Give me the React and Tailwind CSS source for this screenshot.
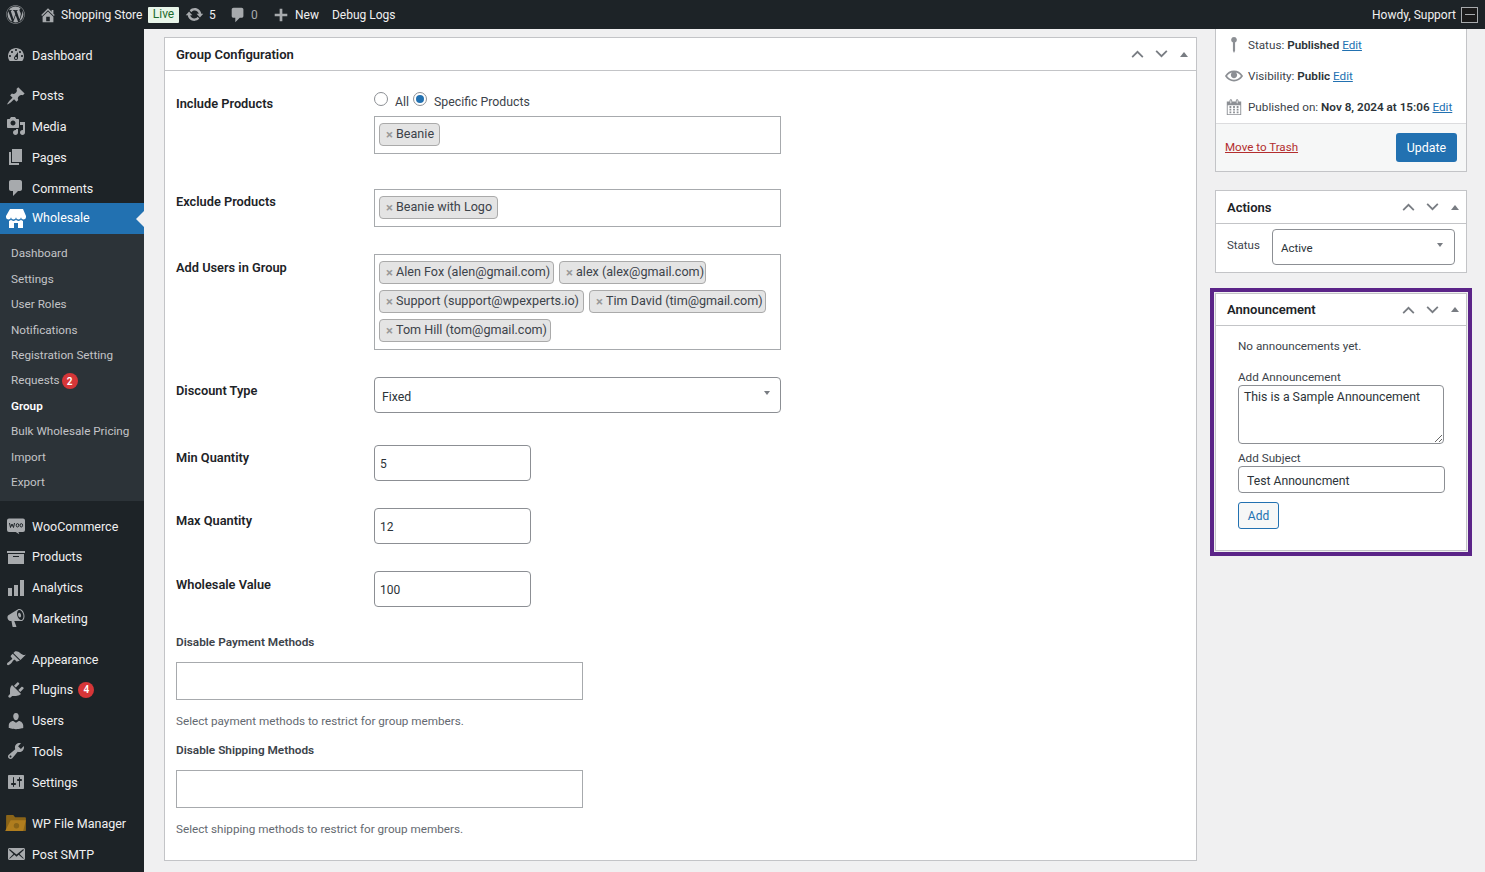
import React from "react";
import { FaWordpress } from "react-icons/fa";

const P = {
  dashboard: "M3.76 16h12.48c1.1-1.37 1.76-3.11 1.76-5 0-4.42-3.58-8-8-8s-8 3.58-8 8c0 1.89.66 3.63 1.76 5zM10 4c.55 0 1 .45 1 1s-.45 1-1 1-1-.45-1-1 .45-1 1-1zM6 6c.55 0 1 .45 1 1s-.45 1-1 1-1-.45-1-1 .45-1 1-1zm8 0c.55 0 1 .45 1 1s-.45 1-1 1-1-.45-1-1 .45-1 1-1zm-5.37 5.55L12 7v6c0 1.1-.9 2-2 2s-2-.9-2-2c0-.57.24-1.08.63-1.45zM4 10c.55 0 1 .45 1 1s-.45 1-1 1-1-.45-1-1 .45-1 1-1zm12 0c.55 0 1 .45 1 1s-.45 1-1 1-1-.45-1-1 .45-1 1-1zm-5 3c0-.55-.45-1-1-1s-1 .45-1 1 .45 1 1 1 1-.45 1-1z",
  post: "M10.44 3.02l1.82-1.82 6.36 6.35-1.83 1.82c-1.05-.68-2.48-.57-3.41.36l-.75.75c-.92.93-1.04 2.35-.35 3.41l-1.83 1.82-2.41-2.41-2.8 2.79c-.42.42-3.38 2.71-3.8 2.29s1.86-3.39 2.28-3.81l2.79-2.79L4.1 9.36l1.83-1.82c1.05.69 2.48.57 3.4-.36l.75-.75c.93-.92 1.05-2.35.36-3.41z",
  media: "M13 11V4c0-.55-.45-1-1-1h-1.67L9 1H5L3.67 3H2c-.55 0-1 .45-1 1v7c0 .55.45 1 1 1h10c.55 0 1-.45 1-1zM7 4.5c1.38 0 2.5 1.12 2.5 2.5S8.38 9.5 7 9.5 4.5 8.38 4.5 7 5.62 4.5 7 4.5zM14 6h5v10.5c0 1.38-1.12 2.5-2.5 2.5S14 17.88 14 16.5s1.12-2.5 2.5-2.5c.17 0 .34.02.5.05V9h-3V6zm-4 8.05V13h2v3.5c0 1.38-1.12 2.5-2.5 2.5S7 17.88 7 16.5 8.12 14 9.5 14c.17 0 .34.02.5.05z",
  page: "M6 15V2h10v13H6zm-1 1h8v2H3V5h2v11z",
  comment: "M5 2h9c1.1 0 2 .9 2 2v7c0 1.1-.9 2-2 2h-2l-5 5v-5H5c-1.1 0-2-.9-2-2V4c0-1.1.9-2 2-2z",
  store: "M1 10c.41.29.96.43 1.5.43.55 0 1.09-.14 1.5-.43.62-.46 1-1.17 1-2 0 .83.37 1.54 1 2 .41.29.96.43 1.5.43.55 0 1.09-.14 1.5-.43.62-.46 1-1.17 1-2 0 .83.37 1.54 1 2 .41.29.96.43 1.51.43.54 0 1.08-.14 1.49-.43.62-.46 1-1.17 1-2 0 .83.37 1.54 1 2 .41.29.96.43 1.5.43.55 0 1.09-.14 1.5-.43.63-.46 1-1.17 1-2V7l-3-7H4L0 7v1c0 .83.37 1.54 1 2zm2 8.99h5v-5h4v5h5v-7c-.37-.05-.72-.22-1-.43-.63-.45-1-.73-1-1.56 0 .83-.38 1.11-1 1.56-.41.3-.95.43-1.49.44-.55 0-1.1-.14-1.51-.44-.63-.45-1-.73-1-1.56 0 .83-.38 1.11-1 1.56-.41.3-.95.43-1.5.44-.54 0-1.09-.14-1.5-.44-.63-.45-1-.73-1-1.57 0 .84-.38 1.12-1 1.57-.29.21-.63.38-1 .44v6.99z",
  archive: "M19 4v2H1V4h18zM2 7h16v10H2V7zm11 3V9H7v1h6z",
  chart: "M18 18V2h-4v16h4zm-6 0V7H8v11h4zm-6 0v-8H2v8h4z",
  megaphone: "M18.15 5.94c.46 1.62.38 3.22-.02 4.48-.42 1.28-1.26 2.18-2.3 2.48-.16.06-.26.06-.4.06-.06.02-.12.02-.18.02-.06.02-.14.02-.22.02h-6.8l2.22 5.5c.02.14-.06.26-.14.34-.08.1-.24.16-.34.16H6.95c-.1 0-.26-.06-.34-.16-.08-.08-.16-.2-.14-.34l-1-5.5H4.25l-.02-.02c-.5.06-1.08-.18-1.54-.62s-.88-1.08-1.06-1.88c-.24-.8-.2-1.56-.02-2.2.18-.62.58-1.08 1.06-1.3l.02-.02 9-5.4c.1-.06.18-.1.24-.16.06-.04.14-.08.24-.12.16-.08.28-.12.5-.18 1.04-.3 2.24.1 3.22.98s1.76 2.18 2.2 3.82zm-2.58 5.98h-.02c.4-.1.74-.34 1.04-.7.58-.7.86-1.76.86-3.04 0-.64-.1-1.3-.28-1.98-.34-1.36-1.02-2.5-1.78-3.24s-1.68-1.1-2.46-.88c-.82.22-1.4.96-1.7 2-.32 1.04-.28 2.36.06 3.72.38 1.36 1 2.5 1.8 3.24.78.74 1.62 1.1 2.48.88zm-2.54-7.08c.22-.04.42-.02.62.04.38.16.76.48 1.02 1s.42 1.2.42 1.78c0 .3-.04.56-.12.8-.18.48-.44.84-.86.94-.34.1-.8-.06-1.14-.4s-.64-.86-.78-1.5c-.18-.62-.12-1.24.02-1.72s.48-.84.82-.94z",
  appearance: "M14.48 11.06L7.41 3.99l1.5-1.5c.5-.56 2.3-.47 3.51.32 1.21.8 1.43 1.28 2.91 2.1 1.18.64 2.45 1.26 4.45.85zm-.71.71L6.7 4.7 4.93 6.47c-.39.39-.39 1.02 0 1.41l1.06 1.06c.39.39.39 1.03 0 1.42-.6.6-1.43 1.11-2.21 1.69-.35.26-.7.53-1.01.84C1.43 13.23.4 14.98 1.25 15.83c.86.85 2.6-.18 3.94-1.52.31-.31.58-.66.84-1.02.57-.78 1.08-1.61 1.69-2.21.39-.39 1.02-.39 1.41 0l1.06 1.06c.39.39 1.02.39 1.41 0z",
  plugin: "M13.11 4.36L9.87 7.6 8 5.73l3.24-3.24c.35-.34 1.05-.2 1.56.32.52.51.66 1.21.31 1.55zm-8 1.77l.91-1.12 9.01 9.01-1.19.84c-.71.71-2.63 1.16-3.82 1.16H6.14L4.9 17.26c-.59.59-1.54.59-2.12 0-.59-.58-.59-1.53 0-2.12l1.24-1.24v-3.88c0-1.13.4-3.19 1.09-3.89zm7.26 3.97l3.24-3.24c.34-.35 1.04-.21 1.55.31.52.51.66 1.21.31 1.55l-3.24 3.25z",
  users: "M10 9.25c-2.27 0-2.73-3.44-2.73-3.44C7 4.02 7.82 2 9.97 2c2.16 0 2.98 2.02 2.71 3.81 0 0-.41 3.44-2.68 3.44zm0 2.57L12.72 10c2.39 0 4.52 2.33 4.52 4.53v2.49s-3.65 1.13-7.24 1.13c-3.65 0-7.24-1.13-7.24-1.13v-2.49c0-2.25 1.94-4.48 4.47-4.48z",
  tools: "M16.68 9.77c-1.34 1.34-3.3 1.67-4.95.99l-5.41 6.52c-.99.99-2.59.99-3.58 0s-.99-2.59 0-3.57l6.52-5.42c-.68-1.65-.35-3.61.99-4.95 1.28-1.28 3.12-1.62 4.72-1.06l-2.89 2.89 2.82 2.82 2.86-2.87c.53 1.58.18 3.39-1.08 4.65zM3.81 16.21c.4.39 1.04.39 1.43 0 .4-.4.4-1.04 0-1.43-.39-.4-1.03-.4-1.43 0-.39.39-.39 1.03 0 1.43z",
  settings: "M18 16V4c0-.55-.45-1-1-1H3c-.55 0-1 .45-1 1v12c0 .55.45 1 1 1h14c.55 0 1-.45 1-1zM8 11h1c.55 0 1 .45 1 1s-.45 1-1 1H8v1.5c0 .28-.22.5-.5.5s-.5-.22-.5-.5V13H6c-.55 0-1-.45-1-1s.45-1 1-1h1V5.5c0-.28.22-.5.5-.5s.5.22.5.5V11zm5-2h-1c-.55 0-1-.45-1-1s.45-1 1-1h1V5.5c0-.28.22-.5.5-.5s.5.22.5.5V7h1c.55 0 1 .45 1 1s-.45 1-1 1h-1v5.5c0 .28-.22.5-.5.5s-.5-.22-.5-.5V9z",
  email: "M19 14.5v-9c0-.83-.67-1.5-1.5-1.5H3.49c-.83 0-1.5.67-1.5 1.5v9c0 .83.67 1.5 1.5 1.5H17.5c.83 0 1.5-.67 1.5-1.5zm-1.31-9.11c.33.33.15.67-.03.84L13.6 9.95l3.9 4.06c.12.14.2.36.06.51-.13.16-.43.15-.56.05l-4.37-3.73-2.14 1.95-2.13-1.95-4.37 3.73c-.13.1-.43.11-.56-.05-.14-.15-.06-.37.06-.51l3.9-4.06-4.06-3.72c-.18-.17-.36-.51-.03-.84s.67-.17.95.07l6.24 5.04 6.25-5.04c.28-.24.62-.4.95-.07z",
  home: "M16 8.5l1.53 1.53-1.06 1.06L10 4.62l-6.47 6.47-1.06-1.06L10 2.5l4 4v-2h2v4zm-6-2.46l6 5.99V18H4v-5.97zM12 17v-5H8v5h4z",
  update: "M10.2 3.28c3.53 0 6.43 2.61 6.92 6h2.08l-3.5 4-3.5-4h2.32c-.45-1.97-2.21-3.45-4.32-3.45-1.45 0-2.73.71-3.54 1.78L4.95 5.66C6.23 4.2 8.11 3.28 10.2 3.28zm-.4 13.44c-3.52 0-6.43-2.61-6.92-6H.8l3.5-4c1.17 1.33 2.33 2.67 3.5 4H5.48c.45 1.97 2.21 3.45 4.32 3.45 1.45 0 2.73-.71 3.54-1.78l1.71 1.95c-1.28 1.46-3.15 2.38-5.25 2.38z",
  plus: "M17 8.5v3h-5.5V17h-3v-5.5H3v-3h5.5V3h3v5.5H17z",
  pin: "M10 1a3.2 3.2 0 0 1 1.200 6.170V16.500L10 19l-1.200-2.500V7.170A3.200 3.200 0 0 1 10 1z",
  eye: "M19.7 9.4C17.7 6 14 3.9 10 3.9S2.3 6 .3 9.4L0 10l.3.6c2 3.4 5.7 5.5 9.7 5.5s7.7-2.1 9.7-5.5l.3-.6-.3-.6zM10 14.1c-3.1 0-6-1.6-7.7-4.1C3.6 8 5.7 6.6 8 6.1c-.9.6-1.5 1.7-1.5 2.9 0 1.9 1.6 3.5 3.5 3.5s3.5-1.6 3.5-3.5c0-1.2-.6-2.2-1.5-2.9 2.3.5 4.4 1.9 5.7 3.9-1.7 2.5-4.6 4.1-7.7 4.1z",
  calendar: "M15 4h3v15H2V4h3V3c0-.41.15-.76.44-1.06.29-.29.65-.44 1.06-.44s.77.15 1.06.44c.29.3.44.65.44 1.06v1h4V3c0-.41.15-.76.44-1.06.29-.29.65-.44 1.06-.44s.77.15 1.06.44c.29.3.44.65.44 1.06v1zM6 3v2.5c0 .14.05.26.15.36.09.09.21.14.35.14s.26-.05.35-.14c.1-.1.15-.22.15-.36V3c0-.14-.05-.26-.15-.35-.09-.1-.21-.15-.35-.15s-.26.05-.35.15c-.1.09-.15.21-.15.35zm7 0v2.5c0 .14.05.26.14.36.1.09.22.14.36.14s.26-.05.36-.14c.09-.1.14-.22.14-.36V3c0-.14-.05-.26-.14-.35-.1-.1-.22-.15-.36-.15s-.26.05-.36.15c-.09.09-.14.21-.14.35zm4 15V8H3v10h14zM7 9v2H5V9h2zm2 0h2v2H9V9zm4 2V9h2v2h-2zm-6 1v2H5v-2h2zm2 0h2v2H9v-2zm4 2v-2h2v2h-2zm-6 1v2H5v-2h2zm4 2H9v-2h2v2zm4 0h-2v-2h2v2z",
};

const Ic = ({ d, className }) => (
  <svg viewBox="0 0 20 20" className={className} fill="currentColor" aria-hidden="true"><path d={d} /></svg>
);

const Woo = () => (
  <svg viewBox="0 0 20 20" className="w-[20px] h-[20px] text-[#a7aaad]" aria-hidden="true">
    <path fill="currentColor" d="M3 2.500h14a2 2 0 0 1 2 2v9.500a2 2 0 0 1-2 2h-4.600l.9 2.300-3.600-2.300H3a2 2 0 0 1-2-2V4.500a2 2 0 0 1 2-2z" />
    <path fill="none" stroke="#1d2327" strokeWidth="1" d="M3.500 7l1 4.500 1.500-3.500 1.500 3.500 1-4.500" />
    <ellipse cx="11.500" cy="9.300" rx="1.300" ry="1.700" fill="none" stroke="#1d2327" strokeWidth="1" />
    <ellipse cx="15.300" cy="9.300" rx="1.300" ry="1.700" fill="none" stroke="#1d2327" strokeWidth="1" />
  </svg>
);

const Folder = () => (
  <svg viewBox="0 0 24 20" className="w-[22px] h-[18px]" aria-hidden="true">
    <path fill="#8a6418" d="M2 1h7l2 2.500h11a1 1 0 0 1 1 1V18a1 1 0 0 1-1 1H1V2a1 1 0 0 1 1-1z" />
    <path fill="#b07d1e" d="M6 7h17l-3 12H0z" />
    <circle cx="12.500" cy="13" r="3" fill="#8a6418" />
  </svg>
);

const Badge = ({ n, ml }) => (
  <span className={`inline-flex w-[16px] h-[16px] items-center justify-center rounded-full bg-[#d63638] text-white text-[10px] font-semibold ${ml}`}>{n}</span>
);

const Row = ({ icon, custom, label, badge, active }) => (
  <div className={`relative flex items-center h-[30.75px] ${active ? "bg-[#2271b1] text-white" : "text-[#f0f0f1]"}`}>
    <div className="w-[32px] flex justify-center shrink-0">
      {custom || <Ic d={icon} className={`w-[20px] h-[20px] ${active ? "text-white" : "text-[#a7aaad]"}`} />}
    </div>
    <span className={active ? "" : "pt-[2px]"}>{label}</span>
    {badge && <Badge n={badge} ml="ml-[5px]" />}
    {active && <span className="absolute right-0 top-[8px] w-0 h-0 border-y-[8px] border-y-transparent border-r-[8px] border-r-[#f0f0f1]" />}
  </div>
);

const Sub = ({ label, badge, cur }) => (
  <div className={`flex items-center h-[25.4px] pl-[11px] text-[11.7px] ${cur ? "text-white font-semibold" : "text-[#c3c4c7]"}`}>
    <span>{label}</span>
    {badge && <Badge n={badge} ml="ml-[2px]" />}
  </div>
);

const Sidebar = () => (
  <aside className="w-[144px] shrink-0 bg-[#1d2327] text-[12.5px] pt-[11px]">
    <Row icon={P.dashboard} label="Dashboard" />
    <div className="h-[9.500px]" />
    <Row icon={P.post} label="Posts" />
    <Row icon={P.media} label="Media" />
    <Row icon={P.page} label="Pages" />
    <Row icon={P.comment} label="Comments" />
    <Row icon={P.store} label="Wholesale" active />
    <div className="bg-[#2c3338] pt-[7.500px] pb-[5.500px]">
      {["Dashboard", "Settings", "User Roles", "Notifications", "Registration Setting"].map((s) => <Sub key={s} label={s} />)}
      <Sub label="Requests" badge="2" />
      <Sub label="Group" cur />
      {["Bulk Wholesale Pricing", "Import", "Export"].map((s) => <Sub key={s} label={s} />)}
    </div>
    <div className="h-[9.750px]" />
    <Row custom={<Woo />} label="WooCommerce" />
    <Row icon={P.archive} label="Products" />
    <Row icon={P.chart} label="Analytics" />
    <Row icon={P.megaphone} label="Marketing" />
    <div className="h-[10px]" />
    <Row icon={P.appearance} label="Appearance" />
    <Row icon={P.plugin} label="Plugins" badge="4" />
    <Row icon={P.users} label="Users" />
    <Row icon={P.tools} label="Tools" />
    <Row icon={P.settings} label="Settings" />
    <div className="h-[10.500px]" />
    <Row custom={<Folder />} label="WP File Manager" />
    <Row icon={P.email} label="Post SMTP" />
  </aside>
);

const TopBar = () => (
  <header className="h-[29px] bg-[#1d2327] text-[#f0f0f1] text-[12px] flex items-center shrink-0">
    <FaWordpress className="ml-[6px] w-[19px] h-[19px] text-[#a7aaad]" />
    <Ic d={P.home} className="ml-[14px] w-[18px] h-[18px] text-[#a7aaad]" />
    <span className="ml-[4px] w-[81px] whitespace-nowrap">Shopping Store</span>
    <span className="ml-[6px] w-[31px] h-[16px] bg-[#e8f5e9] rounded-[1px] text-[#1e6b2e] text-[12px] leading-[15px] text-center">Live</span>
    <Ic d={P.update} className="ml-[6px] w-[19px] h-[19px] text-[#a7aaad]" />
    <span className="ml-[5px] w-[7px]">5</span>
    <Ic d={P.comment} className="ml-[13px] w-[18px] h-[18px] text-[#a7aaad]" />
    <span className="ml-[4px] w-[7px] text-[#a7aaad]">0</span>
    <Ic d={P.plus} className="ml-[14px] w-[18px] h-[18px] text-[#a7aaad]" />
    <span className="ml-[5px]">New</span>
    <span className="ml-[13px]">Debug Logs</span>
    <span className="ml-auto">Howdy, Support</span>
    <span className="ml-[5px] mr-[7px] w-[17px] h-[16px] border border-[#a7aaad] bg-[#1a1a1a] flex items-center justify-center">
      <span className="w-[10px] h-[1px] bg-[#a7aaad]" />
    </span>
  </header>
);

const Up = () => (
  <svg viewBox="0 0 14 9" className="w-[13px] h-[8px] text-[#787c82]" fill="none" stroke="currentColor" strokeWidth="2"><path d="M1 8l6-6 6 6" /></svg>
);
const Down = () => (
  <svg viewBox="0 0 14 9" className="w-[13px] h-[8px] text-[#787c82]" fill="none" stroke="currentColor" strokeWidth="2"><path d="M1 1l6 6 6-6" /></svg>
);
const Handles = () => (
  <div className="flex items-center">
    <Up />
    <span className="ml-[11px] mr-[12px]"><Down /></span>
    <span className="w-0 h-0 border-x-[4px] border-x-transparent border-b-[5px] border-b-[#787c82]" />
  </div>
);

const BoxHead = ({ title, className }) => (
  <div className={`flex items-center justify-between border-b border-[#c3c4c7] pl-[11px] ${className}`}>
    <span className="text-[13px] font-semibold text-[#1d2327] pt-[1px]">{title}</span>
    <Handles />
  </div>
);

const Tag = ({ children, w }) => (
  <span className={`inline-flex items-center h-[23px] bg-[#e4e4e4] border border-[#aaa] rounded-[4px] pl-[6px] text-[12.6px] text-[#3c434a] whitespace-nowrap ${w}`}>
    <span className="shrink-0 text-[#999] font-bold text-[13px] w-[10px]">×</span>
    {children}
  </span>
);

const Multi = ({ children }) => (
  <div className="w-[407px] min-h-[38px] border border-[#a7aaad] bg-white pl-[4px] pt-[6px] pb-[7px] flex flex-wrap gap-x-[5px] gap-y-[6px]">
    {children}
  </div>
);

const FormRow = ({ label, mt, children, lt }) => (
  <div className={`flex ${mt}`}>
    <div className={`w-[198px] shrink-0 text-[12.8px] font-semibold text-[#1d2327] ${lt}`}>{label}</div>
    {children}
  </div>
);

const NumInput = ({ v }) => (
  <input readOnly value={v} className="w-[157px] h-[36px] border border-[#8c8f94] rounded-[4px] bg-white px-[5px] pt-[2px] text-[12px] text-[#2c3338] outline-none" />
);

const Block = ({ label, help, mt }) => (
  <div className={mt}>
    <div className="text-[11.8px] font-semibold text-[#3c434a] leading-[18px]">{label}</div>
    <div className="mt-[11px] w-[407px] h-[38px] border border-[#a7aaad] bg-white" />
    <div className="mt-[12px] text-[11.7px] text-[#646970] leading-[18px]">{help}</div>
  </div>
);

const Main = () => (
  <section className="w-[1033px] h-[824px] mt-[8px] border border-[#c3c4c7] bg-white shrink-0">
    <BoxHead title="Group Configuration" className="h-[33px] pr-[8px]" />
    <div className="pl-[11px] pt-[20px]">
      <FormRow label="Include Products" lt="pt-[3px]">
        <div>
          <div className="flex items-center h-[25px] pb-[4px] text-[12.3px] text-[#3c434a]">
            <span className="w-[14px] h-[14px] rounded-full border border-[#8c8f94] bg-white -mt-[5px]" />
            <span className="ml-[7px] w-[14px] pt-[2px]">All</span>
            <span className="ml-[4px] w-[14px] h-[14px] rounded-full border border-[#8c8f94] bg-white flex items-center justify-center -mt-[5px]">
              <span className="w-[8px] h-[8px] rounded-full bg-[#2271b1]" />
            </span>
            <span className="ml-[7px] pt-[2px]">Specific Products</span>
          </div>
          <Multi><Tag w="w-[61px]">Beanie</Tag></Multi>
        </div>
      </FormRow>
      <FormRow label="Exclude Products" mt="mt-[35px]" lt="pt-[3px]">
        <Multi><Tag w="w-[119px]">Beanie with Logo</Tag></Multi>
      </FormRow>
      <FormRow label="Add Users in Group" mt="mt-[27px]" lt="pt-[4px]">
        <Multi>
          <Tag w="w-[175px]">Alen Fox (alen@gmail.com)</Tag>
          <Tag w="w-[147px]">alex (alex@gmail.com)</Tag>
          <Tag w="w-[205px]">Support (support@wpexperts.io)</Tag>
          <Tag w="w-[177px]">Tim David (tim@gmail.com)</Tag>
          <Tag w="w-[172px]">Tom Hill (tom@gmail.com)</Tag>
        </Multi>
      </FormRow>
      <FormRow label="Discount Type" mt="mt-[27px]" lt="pt-[4px]">
        <div className="w-[407px] h-[36px] border border-[#8c8f94] rounded-[4px] bg-white flex items-center justify-between pl-[7px] pr-[10px] pt-[4px] text-[12.3px] text-[#2c3338]">
          <span>Fixed</span>
          <span className="w-0 h-0 border-x-[3px] border-x-transparent border-t-[4px] border-t-[#787c82] -mt-[8px]" />
        </div>
      </FormRow>
      <FormRow label="Min Quantity" mt="mt-[32px]" lt="pt-[3px]"><NumInput v="5" /></FormRow>
      <FormRow label="Max Quantity" mt="mt-[27px]" lt="pt-[3px]"><NumInput v="12" /></FormRow>
      <FormRow label="Wholesale Value" mt="mt-[27px]" lt="pt-[4px]"><NumInput v="100" /></FormRow>
      <Block label="Disable Payment Methods" help="Select payment methods to restrict for group members." mt="mt-[26px]" />
      <Block label="Disable Shipping Methods" help="Select shipping methods to restrict for group members." mt="mt-[11px]" />
    </div>
  </section>
);

const Link = ({ children }) => <span className="text-[#2271b1] underline font-normal">{children}</span>;

const Meta = ({ icon, iconCls, children, mt }) => (
  <div className={`flex items-center h-[20px] text-[11.700px] text-[#3c434a] whitespace-nowrap ${mt}`}>
    <span className="w-[32px] flex justify-center pl-[3px] shrink-0">
      <Ic d={icon} className={`text-[#8c8f94] ${iconCls}`} />
    </span>
    <span className="pt-[2px]">{children}</span>
  </div>
);

const Side = () => (
  <div className="w-[252px] shrink-0 ml-[18px]">
    <div className="border-x border-b border-[#c3c4c7] bg-white">
      <div className="pt-[6px] h-[94px]">
        <Meta icon={P.pin} iconCls="w-[18px] h-[18px]">Status: <b className="font-semibold text-[#2c3338]">Published</b> <Link>Edit</Link></Meta>
        <Meta icon={P.eye} iconCls="w-[18px] h-[18px]" mt="mt-[11px]">Visibility: <b className="font-semibold text-[#2c3338]">Public</b> <Link>Edit</Link></Meta>
        <Meta icon={P.calendar} iconCls="w-[18px] h-[18px]" mt="mt-[11px]">Published on: <b className="font-semibold text-[#2c3338]">Nov 8, 2024 at 15:06</b> <Link>Edit</Link></Meta>
      </div>
      <div className="h-[48px] border-t border-[#dcdcde] bg-[#f6f7f7] flex items-center justify-between pl-[9px] pr-[9px]">
        <span className="text-[#b32d2e] underline text-[11.600px]">Move to Trash</span>
        <span className="w-[61px] h-[29px] rounded-[3px] bg-[#2271b1] text-white text-[12.400px] pt-[1px] flex items-center justify-center">Update</span>
      </div>
    </div>

    <div className="mt-[18px] h-[83px] border border-[#c3c4c7] bg-white">
      <BoxHead title="Actions" className="h-[33px] pr-[7px]" />
      <div className="flex pl-[11px] pt-[5px]">
        <span className="w-[45px] pt-[8px] text-[11.500px] text-[#3c434a]">Status</span>
        <div className="w-[183px] h-[36px] border border-[#8c8f94] rounded-[4px] flex items-center justify-between pl-[8px] pr-[11px] pt-[3px] text-[11.500px] text-[#2c3338]">
          <span>Active</span>
          <span className="w-0 h-0 border-x-[3px] border-x-transparent border-t-[4px] border-t-[#787c82] -mt-[7px]" />
        </div>
      </div>
    </div>

    <div className="mt-[15px] -mx-[5px] h-[268px] border-[4px] border-[#5b2488] p-[1px]">
      <div className="h-full border border-[#c3c4c7] bg-white">
        <BoxHead title="Announcement" className="h-[32px] pr-[7px]" />
        <div className="pl-[22px] text-[11.700px] text-[#3c434a]">
          <p className="pt-[11px] leading-[18px]">No announcements yet.</p>
          <label className="block mt-[13px] leading-[18px]">Add Announcement</label>
          <textarea readOnly value="This is a Sample Announcement" className="block -mt-[1px] w-[206px] h-[59px] border border-[#8c8f94] rounded-[4px] px-[5px] py-[1px] text-[12.300px] leading-[20px] text-[#2c3338] outline-none" />
          <label className="block mt-[5px] leading-[18px]">Add Subject</label>
          <input readOnly value="Test Announcment" className="block -mt-[1px] w-[207px] h-[27px] border border-[#8c8f94] rounded-[4px] px-[8px] pt-[3px] text-[12.200px] text-[#2c3338] outline-none" />
          <span className="mt-[9px] w-[41px] h-[27px] border border-[#2271b1] rounded-[3px] bg-[#f6f7f7] text-[#2271b1] pt-[1px] flex items-center justify-center text-[12px]">Add</span>
        </div>
      </div>
    </div>
  </div>
);

export default function App() {
  return (
    <div className="h-[872px] overflow-hidden flex flex-col bg-[#f0f0f1] font-['Roboto','Open_Sans',sans-serif]">
      <TopBar />
      <div className="flex flex-1 min-h-0">
        <Sidebar />
        <div className="flex pl-[20px]">
          <Main />
          <Side />
        </div>
      </div>
    </div>
  );
}
